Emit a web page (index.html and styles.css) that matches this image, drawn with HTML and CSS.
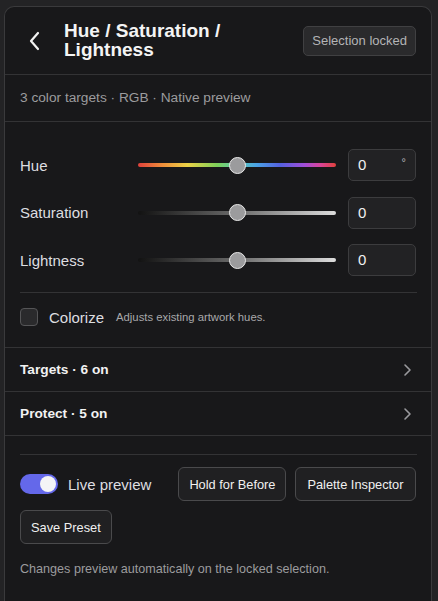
FILE: index.html
```html
<!DOCTYPE html>
<html>
<head>
<meta charset="UTF-8">
<title>Hue / Saturation / Lightness</title>
<link rel="stylesheet" href="styles.css">
</head>
<body>
<div class="panel">
	<!-- header -->
	<div class="header">
		<svg class="back" width="14" height="20" viewBox="0 0 14 20"><path d="M10 2 L3 10 L10 18" fill="none" stroke="#f2f2f2" stroke-width="2.2" stroke-linecap="round" stroke-linejoin="round"/></svg>
		<h1 class="title">Hue / Saturation / Lightness</h1>
		<span class="badge">Selection locked</span>
	</div>
	<div class="meta">3 color targets · RGB · Native preview</div>

	<!-- sliders -->
	<div class="adjust">
		<div class="row">
			<span class="label">Hue</span>
			<div class="track hue"><span class="thumb"></span></div>
			<div class="num"><span>0</span><span class="unit">°</span></div>
		</div>
		<div class="row">
			<span class="label">Saturation</span>
			<div class="track gray"><span class="thumb"></span></div>
			<div class="num"><span>0</span></div>
		</div>
		<div class="row">
			<span class="label">Lightness</span>
			<div class="track gray"><span class="thumb"></span></div>
			<div class="num"><span>0</span></div>
		</div>
		<div class="colorize">
			<span class="check"></span>
			<span class="colorize-label">Colorize</span>
			<span class="hint">Adjusts existing artwork hues.</span>
		</div>
	</div>

	<div class="nav">Targets · 6 on
		<svg width="10" height="14" viewBox="0 0 10 14"><path d="M3 2 L8 7 L3 12" fill="none" stroke="#9a9a9e" stroke-width="1.6" stroke-linecap="round" stroke-linejoin="round"/></svg>
	</div>
	<div class="nav">Protect · 5 on
		<svg width="10" height="14" viewBox="0 0 10 14"><path d="M3 2 L8 7 L3 12" fill="none" stroke="#9a9a9e" stroke-width="1.6" stroke-linecap="round" stroke-linejoin="round"/></svg>
	</div>

	<!-- actions -->
	<div class="footer">
		<div class="actions">
			<div class="live">
				<span class="toggle"><span class="knob"></span></span>
				<span>Live preview</span>
			</div>
			<button class="btn">Hold for Before</button>
			<button class="btn">Palette Inspector</button>
			<button class="btn">Save Preset</button>
		</div>
		<p class="note">Changes preview automatically on the locked selection.</p>
	</div>
</div>
</body>
</html>
```

FILE: styles.css
```css
body {
	margin: 0;
	background: #232325;
	font-family: "Liberation Sans", Arial, sans-serif;
	color: #e6e6e6;
}
.panel {
	margin: 6px 6px 0 4px;
	height: 620px;
	background: #18181a;
	border: 1px solid #3a3a3c;
	border-bottom: none;
	border-radius: 10px 10px 0 0;
	box-sizing: border-box;
}
.header {
	display: flex;
	align-items: center;
	height: 67px;
	padding: 0 15px 0 23px;
	border-bottom: 1px solid #333335;
}
.back { flex: none; margin-right: 22px; }
.title {
	flex: 1;
	margin: 0;
	font-size: 19px;
	line-height: 18.5px;
	font-weight: bold;
	color: #f4f4f4;
	padding-right: 30px;
}
.badge {
	flex: none;
	padding: 0 8px;
	height: 30px;
	line-height: 28px;
	box-sizing: border-box;
	background: #2a2a2c;
	border: 1px solid #404042;
	border-radius: 5px;
	font-size: 13px;
	color: #b4b4b6;
}
.meta {
	height: 46px;
	line-height: 46px;
	padding: 0 15px;
	font-size: 13.7px;
	color: #9c9c9e;
	border-bottom: 1px solid #333335;
}
.adjust {
	padding: 27px 14px 0 15px;
	border-bottom: 1px solid #333335;
}
.row {
	display: flex;
	align-items: center;
	height: 32px;
	margin-bottom: 15.5px;
}
.row:nth-child(3) { margin-bottom: 16px; }
.label {
	width: 118px;
	font-size: 15px;
	color: #dedee0;
}
.track {
	position: relative;
	width: 198px;
	height: 4px;
	border-radius: 2px;
	margin-right: 12px;
}
.hue {
	background: linear-gradient(to right, #e0413c, #ef8c3a 12%, #ecd246 25%, #7dd05a 40%, #5ccab0 50%, #4aa2e6 60%, #5560e0 72%, #a04ed8 84%, #d8449a 92%, #e0413c);
}
.gray {
	background: linear-gradient(to right, #121212, #6a6a6a 50%, #dcdcdc);
}
.thumb {
	position: absolute;
	left: 50%;
	top: 50%;
	width: 15px;
	height: 15px;
	margin: -8.5px 0 0 -8.5px;
	border-radius: 50%;
	background: #9b9b9d;
	border: 1px solid #e8e8e8;
}
.num {
	display: flex;
	justify-content: space-between;
	width: 68px;
	height: 32px;
	box-sizing: border-box;
	padding: 0 9px 0 9px;
	line-height: 30px;
	font-size: 15px;
	color: #f0f0f0;
	background: #222224;
	border: 1px solid #3c3c3e;
	border-radius: 5px;
}
.unit { font-size: 11px; line-height: 24px; color: #b8b8ba; }
.colorize {
	display: flex;
	align-items: center;
	border-top: 1px solid #333335;
	padding: 15px 0 21px;
}
.check {
	width: 16px;
	height: 16px;
	border: 1px solid #555557;
	border-radius: 4px;
	background: #2a2a2c;
	margin-right: 11px;
}
.colorize-label { font-size: 15px; color: #dedee0; margin-right: 12px; }
.hint { font-size: 11.3px; color: #a8a8aa; }
.nav {
	display: flex;
	align-items: center;
	justify-content: space-between;
	height: 43px;
	padding: 0 19px 0 15px;
	font-size: 13.7px;
	font-weight: bold;
	color: #f2f2f2;
	border-bottom: 1px solid #333335;
}
.footer { padding: 18px 14px 0 15px; }
.actions {
	display: flex;
	flex-wrap: wrap;
	align-items: center;
	gap: 9px;
	border-top: 1px solid #333335;
	padding-top: 12px;
}
.live {
	display: flex;
	align-items: center;
	gap: 10px;
	font-size: 15px;
	color: #dedee0;
	margin-right: 18px;
}
.toggle {
	position: relative;
	width: 38px;
	height: 20px;
	border-radius: 10px;
	background: #6468ea;
}
.knob {
	position: absolute;
	right: 2px;
	top: 2px;
	width: 16px;
	height: 16px;
	border-radius: 50%;
	background: #f4f4f6;
}
.btn {
	height: 34px;
	padding: 0 10px;
	font-family: "Liberation Sans", Arial, sans-serif;
	font-size: 12.8px;
	color: #f0f0f0;
	background: #202022;
	border: 1px solid #4a4a4c;
	border-radius: 6px;
}
.btn:nth-child(3) { padding: 0 11px; }
.note {
	margin: 18px 0 0;
	font-size: 12.6px;
	color: #9c9c9e;
}
```
